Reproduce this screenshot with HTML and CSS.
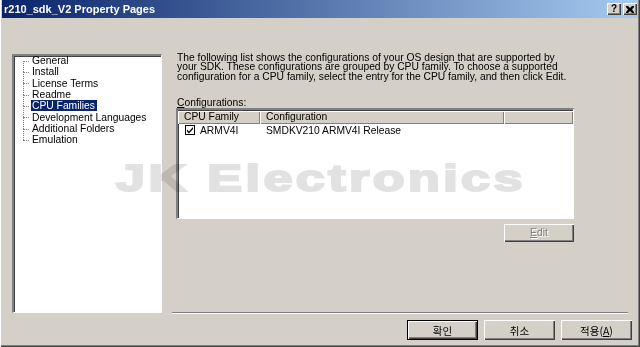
FILE: index.html
```html
<!DOCTYPE html>
<html>
<head>
    <meta charset="utf-8">
    <title>r210_sdk_V2 Property Pages</title>
    <link rel="stylesheet" href="styles.css">
</head>
<body>
    <div class="window">
        <div class="titlebar">
            <span class="title">r210_sdk_V2 Property Pages</span>
            <div class="caption-buttons">
                <span class="cap-btn help">?</span>
                <span class="cap-btn">
                    <svg width="8" height="7" viewBox="0 0 8 7">
                        <path d="M0 0h2l2 2 2-2h2v1L6 3.5 8 6v1H6L4 5 2 7H0V6l2-2.5L0 1z" fill="#000"/>
                    </svg>
                </span>
            </div>
        </div>

        <div class="dialog">
            <div class="main">
                <ul class="tree">
                    <li><span>General</span></li>
                    <li><span>Install</span></li>
                    <li><span>License Terms</span></li>
                    <li><span>Readme</span></li>
                    <li class="selected"><span>CPU Families</span></li>
                    <li><span>Development Languages</span></li>
                    <li><span>Additional Folders</span></li>
                    <li><span>Emulation</span></li>
                </ul>

                <div class="page">
                    <p class="intro">The following list shows the configurations of your OS design that are supported by your SDK. These configurations are grouped by CPU family. To choose a supported configuration for a CPU family, select the entry for the CPU family, and then click Edit.</p>
                    <div class="field-label"><u>C</u>onfigurations:</div>
                    <div class="listview">
                        <div class="lv-header">
                            <div class="col col-family">CPU Family</div>
                            <div class="col col-config">Configuration</div>
                            <div class="col col-rest"></div>
                        </div>
                        <div class="lv-row">
                            <div class="cell col-family">
                                <span class="checkbox">
                                    <svg width="8" height="8" viewBox="0 0 8 8">
                                        <path d="M1 3.5l2 2 4-4.5v2L3 7.5l-2-2z" fill="#000"/>
                                    </svg>
                                </span>
                                ARMV4I
                            </div>
                            <div class="cell col-config">SMDKV210 ARMV4I Release</div>
                        </div>
                    </div>
                    <div class="edit-row">
                        <button class="btn edit-btn" disabled><u>E</u>dit</button>
                    </div>
                </div>
            </div>

            <div class="footer">
                <button class="btn kr default">확인</button>
                <button class="btn kr">취소</button>
                <button class="btn kr">적용(<u>A</u>)</button>
            </div>
        </div>

        <div class="watermark">JK Electronics</div>
    </div>
</body>
</html>
```

FILE: styles.css
```css
body {
    margin: 0;
    background: #d4d0c8;
    font-family: "Liberation Sans", Arial, sans-serif;
    font-size: 10.3px;
    color: #000;
}
.window {
    position: relative;
    width: 640px;
    height: 347px;
    background: #d4d0c8;
    box-shadow: inset 1px 0 #fff, inset -1px -1px #404040, inset -2px -2px #808080;
    overflow: hidden;
}
.titlebar {
    height: 18px;
    margin: 0 2px;
    padding-left: 2px;
    display: flex;
    align-items: center;
    justify-content: space-between;
    background: linear-gradient(to right, #0a246a, #a6caf0);
}
.title {
    color: #fff;
    font-weight: bold;
    font-size: 11px;
}
.caption-buttons {
    display: flex;
    gap: 2px;
    margin-right: 1px;
}
.cap-btn {
    width: 14px;
    height: 12px;
    box-sizing: border-box;
    background: #d4d0c8;
    box-shadow: inset 1px 1px #fff, inset -1px -1px #404040, inset -2px -2px #808080;
    display: flex;
    align-items: center;
    justify-content: center;
}
.cap-btn.help {
    font-weight: bold;
    font-size: 10px;
    line-height: 12px;
}
.dialog {
    padding: 36px 0 0 12px;
}
.main {
    display: flex;
    gap: 10px;
}
.tree {
    list-style: none;
    margin: 0;
    padding: 0;
    width: 150px;
    height: 259px;
    box-sizing: border-box;
    background: #fff;
    border-top: 2px solid #808080;
    border-left: 2px solid #808080;
    border-right: 1px solid #fff;
    border-bottom: 1px solid #fff;
    box-shadow: inset 1px 1px #404040, 1px 1px #d4d0c8;
}
.tree li {
    position: relative;
    height: 11.33px;
    line-height: 11.33px;
    padding-left: 17px;
}
.tree li:first-child {
    margin-top: -1px;
}
.tree li::before {
    content: "";
    position: absolute;
    left: 9px;
    top: 50%;
    height: 100%;
    border-left: 1px dotted #808080;
}
.tree li:last-child::before {
    display: none;
}
.tree li::after {
    content: "";
    position: absolute;
    left: 9px;
    top: 50%;
    width: 6px;
    border-top: 1px dotted #808080;
}
.tree li span {
    padding: 0 2px 0 1px;
}
.tree li.selected span {
    background: #0a246a;
    color: #fff;
}
.page {
    width: 456px;
    height: 259px;
    box-sizing: border-box;
    padding-left: 4px;
    border-bottom: 1px solid #808080;
    box-shadow: 0 1px #fff;
}
.intro {
    margin: -1px 0 0 1px;
    line-height: 9.3px;
    width: 400px;
}
.field-label {
    margin: 16px 0 0 1px;
    line-height: 11px;
}
.listview {
    width: 398px;
    height: 111px;
    box-sizing: border-box;
    background: #fff;
    border-top: 2px solid #808080;
    border-left: 2px solid #808080;
    border-right: 1px solid #fff;
    border-bottom: 1px solid #fff;
    box-shadow: inset 1px 1px #404040;
}
.lv-header {
    display: flex;
    height: 13px;
    padding-top: 1px;
}
.lv-header .col {
    background: #d4d0c8;
    line-height: 11px;
    box-shadow: inset 1px 1px #fff, inset -1px -1px #808080;
}
.col-family {
    width: 82px;
    padding-left: 6px;
    box-sizing: border-box;
}
.col-config {
    width: 244px;
    padding-left: 6px;
    box-sizing: border-box;
}
.col-rest {
    flex: 1;
}
.lv-row {
    display: flex;
    height: 13px;
    line-height: 13px;
}
.lv-row .col-family {
    padding-left: 7px;
    display: flex;
    align-items: center;
    gap: 5px;
}
.checkbox {
    width: 10px;
    height: 10px;
    box-sizing: border-box;
    border: 1px solid #000;
    background: #fff;
    display: flex;
    align-items: center;
    justify-content: center;
}
.edit-row {
    width: 398px;
    display: flex;
    justify-content: flex-end;
    margin-top: 5px;
}
.btn {
    font-family: "Liberation Sans", Arial, sans-serif;
    font-size: 10.3px;
    background: #d4d0c8;
    border: none;
    padding: 0;
    color: #000;
    box-shadow: inset 1px 1px #fff, inset -1px -1px #404040, inset -2px -2px #808080;
}
.edit-btn {
    width: 70px;
    height: 18px;
}
.edit-btn:disabled {
    color: #808080;
    text-shadow: 1px 1px #fff;
}
.footer {
    display: flex;
    justify-content: flex-end;
    gap: 6px;
    padding: 7px 8px 0 0;
}
.btn.kr {
    width: 71px;
    height: 20px;
    font-family: "Noto Sans CJK KR", "Liberation Sans", sans-serif;
    font-size: 10.5px;
}
.btn.default {
    box-shadow: inset 0 0 0 1px #000, inset 2px 2px #fff, inset -2px -2px #404040, inset -3px -3px #808080;
}
.watermark {
    position: absolute;
    left: 116px;
    top: 160px;
    font-size: 37px;
    line-height: 1;
    font-weight: bold;
    letter-spacing: 2.4px;
    color: #e2e2e2;
    -webkit-text-stroke: 2px #e2e2e2;
    mix-blend-mode: multiply;
    transform: scaleX(1.41);
    transform-origin: left top;
    white-space: nowrap;
    pointer-events: none;
}
```
